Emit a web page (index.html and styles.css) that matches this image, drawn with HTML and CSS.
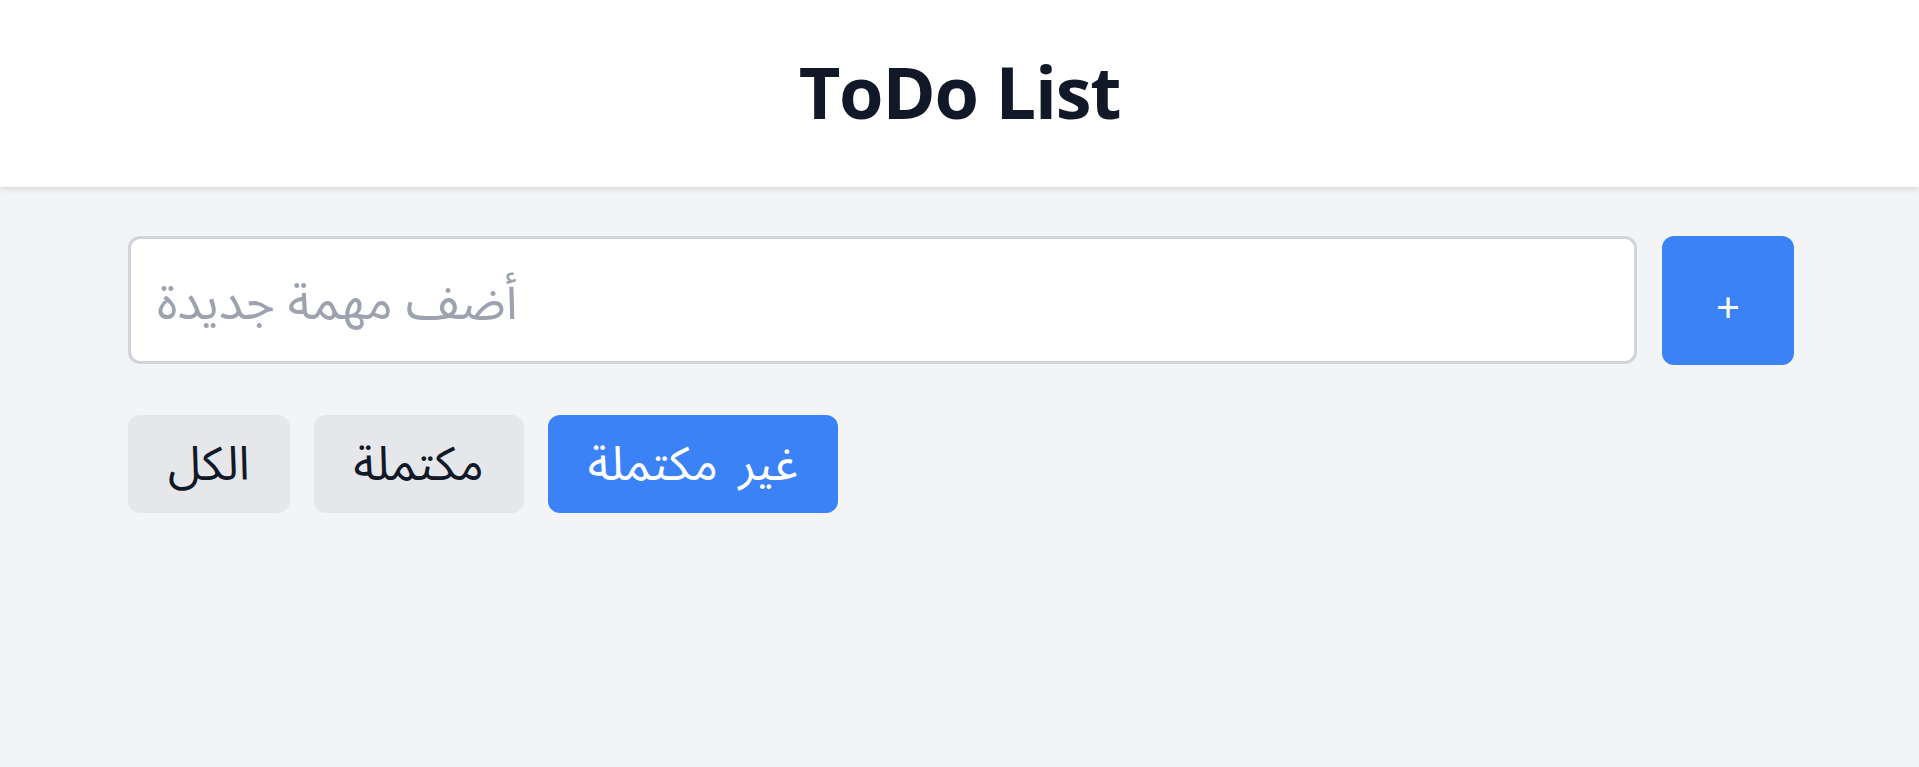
FILE: index.html
```html
<!DOCTYPE html>
<html lang="ar">
<head>
<meta charset="utf-8">
<title>ToDo List</title>
<link rel="stylesheet" href="styles.css">
</head>
<body>
<header class="app-header">
  <h1 class="app-title">ToDo List</h1>
</header>
<main class="app-main">
  <form class="add-row">
    <input class="task-input" type="text" placeholder="أضف مهمة جديدة">
    <button class="add-btn" type="button">+</button>
  </form>
  <div class="filters">
    <button class="filter-btn" type="button">الكل</button>
    <button class="filter-btn" type="button">مكتملة</button>
    <button class="filter-btn active" type="button">غير مكتملة</button>
  </div>
</main>
</body>
</html>
```

FILE: styles.css
```css
* { box-sizing: border-box; }
html, body {
  margin: 0;
  padding: 0;
  height: 100%;
}
body {
  background: #f3f4f6;
  font-family: "Noto Sans", "Noto Sans Arabic", "DejaVu Sans", sans-serif;
  color: #111827;
}
.app-header {
  height: 187px;
  background: #ffffff;
  box-shadow: 0 2px 6px rgba(0, 0, 0, 0.12);
  display: flex;
  align-items: center;
  justify-content: center;
}
.app-title {
  margin: 0;
  font-family: "Open Sans", "Noto Sans", sans-serif;
  font-weight: 700;
  font-size: 72px;
  line-height: 1;
  color: #111827;
  letter-spacing: -1.2px;
  position: relative;
  top: -3px;
}
.app-main {
  padding: 49px 125px 0 128px;
}
.add-row {
  display: flex;
  gap: 25px;
  margin: 0;
}
.task-input {
  flex: 1;
  height: 128px;
  border: 3px solid #d1d5db;
  border-radius: 12px;
  background: #ffffff;
  padding: 6px 26px 0;
  font-family: "Noto Sans Arabic", "DejaVu Sans", sans-serif;
  font-size: 50px;
  color: #111827;
  outline: none;
}
.task-input::placeholder {
  color: #9ca3af;
}
.add-btn {
  width: 132px;
  height: 129px;
  border: none;
  border-radius: 12px;
  background: #3b82f6;
  color: #ffffff;
  font-family: "Noto Sans", sans-serif;
  font-size: 42px;
  line-height: 1;
  padding: 12px 0 0;
  cursor: pointer;
}
.filters {
  display: flex;
  gap: 24px;
  margin-top: 50px;
}
.filter-btn {
  height: 98px;
  padding: 0 40px;
  border: none;
  border-radius: 12px;
  background: #e5e7eb;
  color: #111827;
  font-family: "Noto Sans Arabic", "DejaVu Sans", sans-serif;
  font-size: 47px;
  word-spacing: 8px;
  cursor: pointer;
}
.filter-btn.active {
  background: #3b82f6;
  color: #ffffff;
}
```
